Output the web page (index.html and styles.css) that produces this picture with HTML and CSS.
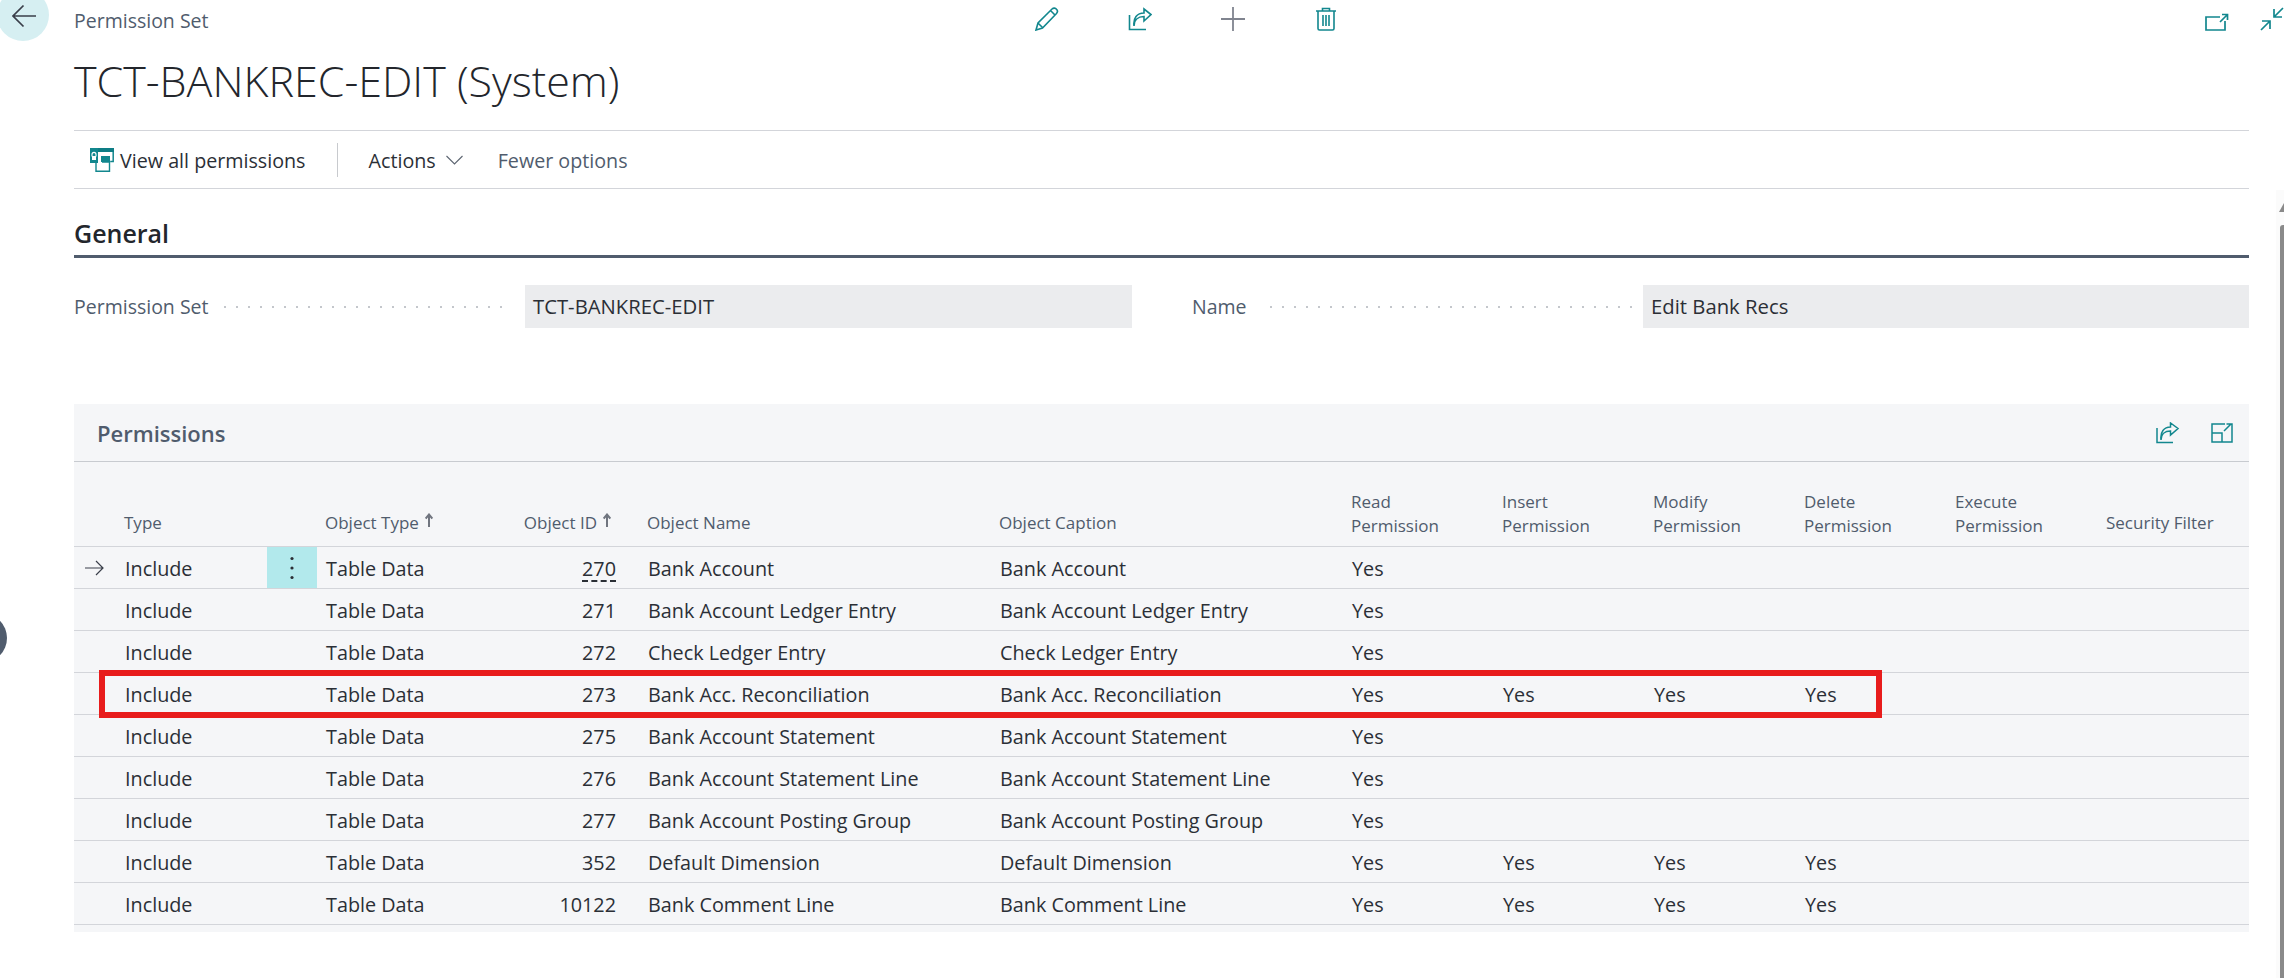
FILE: index.html
```html
<!DOCTYPE html>
<html lang="en">
<head>
<meta charset="utf-8">
<title>TCT-BANKREC-EDIT (System)</title>
<link rel="stylesheet" href="styles.css">
</head>
<body>
<div class="back"><svg width="24" height="24" viewBox="0 0 24 24" fill="none" stroke="#3a3f4a" stroke-width="1.7"><path d="M1 12H24M11.500 1.500 1 12l10.500 10.500"/></svg></div>
<div class="side-dot"></div>
<div class="scrollbar"><div class="scroll-up"></div><div class="scroll-thumb"></div></div>
<main class="page">
  <header class="top">
    <div class="crumb">Permission Set</div>
    <div class="top-icons">
      <svg class="ic" width="24" height="24" viewBox="0 0 24 24" fill="none" stroke="#12878e" stroke-width="1.6"><path d="M1 23l2-7L17 2c1.500-1.300 3.500-1 4.500.2 1.200 1.300 1.200 3 0 4.300L7.500 21zM3 16l5 5M15.500 3.500l5 5"/></svg>
      <svg class="ic" width="24" height="24" viewBox="0 0 24 24" fill="none" stroke="#12878e" stroke-width="1.6"><path d="M1.500 8v14.500H18M6 19c0-6 4-9.500 10-9.500V14l7-6.500L16 2v4C9 6 5 11 6 19z"/></svg>
      <svg class="ic" width="24" height="24" viewBox="0 0 24 24" fill="none" stroke="#80848f" stroke-width="1.800"><path d="M12 0v24M0 12h24"/></svg>
      <svg class="ic" width="24" height="24" viewBox="0 0 24 24" fill="none" stroke="#12878e" stroke-width="1.600"><path d="M2 4h20M4 4v17.500c0 1 .6 1.500 1.500 1.500h13c1 0 1.500-.6 1.500-1.500V4M8.500 4V1.500h7V4M9 8v11M12 8v11M15 8v11"/></svg>
    </div>
    <div class="corner-icons">
      <svg class="expand-ic" width="24" height="20" viewBox="0 0 24 20" fill="none" stroke="#12878e" stroke-width="1.700"><path d="M15 4H1v13h19V8M15 9l7-7M17 1.500h5.500V7"/></svg>
      <svg width="24" height="24" viewBox="0 0 24 24" fill="none" stroke="#12878e" stroke-width="1.700"><path d="M1 23l9-9M2 14H10V22M23 1l-9 9M14 2v8h8"/></svg>
    </div>
  </header>
  <h1 class="title">TCT-BANKREC-EDIT (System)</h1>
  <nav class="toolbar">
    <span class="tool first"><svg width="24" height="24" viewBox="0 0 24 24"><rect x="0" y="0" width="8" height="15" fill="#12878e"/><rect x="8" y="0" width="16" height="4" fill="#0e7d85"/><path d="M2 8.500V6.500c0-2.800 4-2.800 4 0v2" fill="none" stroke="#fff" stroke-width="1.100"/><rect x="2" y="8" width="4" height="4" fill="#fff"/><path d="M23.200 4v9.500h-3" fill="none" stroke="#12878e" stroke-width="1.500"/><rect x="11" y="8" width="9" height="6" fill="#12878e"/><path d="M6 15v8.300h13.500V14H12" fill="none" stroke="#12878e" stroke-width="1.400"/></svg><span class="tool-text">View all permissions</span></span>
    <span class="tool-sep"></span>
    <span class="tool actions"><span class="tool-text">Actions</span><svg width="17" height="10" viewBox="0 0 17 10" fill="none" stroke="#5c6470" stroke-width="1.100"><path d="M.5 1l8 8 8-8"/></svg></span>
    <span class="tool fewer"><span class="tool-text">Fewer options</span></span>
  </nav>
  <section class="general">
    <h2 class="general-title">General</h2>
    <div class="fields">
      <div class="field"><span class="field-label">Permission Set</span><span class="dots"></span><span class="field-value">TCT-BANKREC-EDIT</span></div>
      <div class="field right"><span class="field-label">Name</span><span class="dots"></span><span class="field-value">Edit Bank Recs</span></div>
    </div>
  </section>
  <section class="panel">
    <div class="panel-head">
      <span class="panel-title">Permissions</span>
      <span class="panel-icons">
        <svg width="24" height="22" viewBox="0 0 24 22" fill="none" stroke="#12878e" stroke-width="1.500"><path d="M1 6v14.500h16M5 18c0-6 4-9 9.500-9v4l7.500-6.500L14.500 1v4C8 5 4 10 5 18z"/></svg>
        <svg width="22" height="20" viewBox="0 0 22 20" fill="none" stroke="#12878e" stroke-width="1.500"><path d="M14 1H1v18h20V6M1 10h10v9M13 8l7-7M15.500 1H21v5.500"/></svg>
      </span>
    </div>
    <div class="grid head-row">
      <span></span>
      <span class="h">Type</span>
      <span></span>
      <span class="h h-otype">Object Type<svg class="sort" width="8" height="14" viewBox="0 0 8 14" fill="none" stroke="#70757f" stroke-width="2"><path d="M4 14V2M.7 5.500 4 1.500l3.300 4"/></svg></span>
      <span class="h h-id">Object ID<svg class="sort" width="8" height="14" viewBox="0 0 8 14" fill="none" stroke="#70757f" stroke-width="2"><path d="M4 14V2M.7 5.500 4 1.500l3.300 4"/></svg></span>
      <span class="h c-name">Object Name</span>
      <span class="h">Object Caption</span>
      <span class="h two">Read<br>Permission</span>
      <span class="h two">Insert<br>Permission</span>
      <span class="h two">Modify<br>Permission</span>
      <span class="h two">Delete<br>Permission</span>
      <span class="h two">Execute<br>Permission</span>
      <span class="h">Security Filter</span>
    </div>
    <div class="grid row current">
      <span class="mark"><svg width="19" height="16" viewBox="0 0 19 16" fill="none" stroke="#3a3f4a" stroke-width="1.200"><path d="M0 8h18M11 1l7 7-7 7"/></svg></span>
      <span>Include</span><span class="menu"><svg width="4" height="24" viewBox="0 0 4 24" fill="#2b2f36"><circle cx="2" cy="2.500" r="1.600"/><circle cx="2" cy="12" r="1.600"/><circle cx="2" cy="21.500" r="1.600"/></svg></span><span class="c-otype">Table Data</span><span class="num"><u class="link">270</u></span><span class="c-name">Bank Account</span><span>Bank Account</span><span>Yes</span><span></span><span></span><span></span><span></span><span></span>
    </div>
    <div class="grid row"><span></span><span>Include</span><span></span><span class="c-otype">Table Data</span><span class="num">271</span><span class="c-name">Bank Account Ledger Entry</span><span>Bank Account Ledger Entry</span><span>Yes</span><span></span><span></span><span></span><span></span><span></span></div>
    <div class="grid row"><span></span><span>Include</span><span></span><span class="c-otype">Table Data</span><span class="num">272</span><span class="c-name">Check Ledger Entry</span><span>Check Ledger Entry</span><span>Yes</span><span></span><span></span><span></span><span></span><span></span></div>
    <div class="grid row"><span></span><span>Include</span><span></span><span class="c-otype">Table Data</span><span class="num">273</span><span class="c-name">Bank Acc. Reconciliation</span><span>Bank Acc. Reconciliation</span><span>Yes</span><span>Yes</span><span>Yes</span><span>Yes</span><span></span><span></span><div class="highlight"></div></div>
    <div class="grid row"><span></span><span>Include</span><span></span><span class="c-otype">Table Data</span><span class="num">275</span><span class="c-name">Bank Account Statement</span><span>Bank Account Statement</span><span>Yes</span><span></span><span></span><span></span><span></span><span></span></div>
    <div class="grid row"><span></span><span>Include</span><span></span><span class="c-otype">Table Data</span><span class="num">276</span><span class="c-name">Bank Account Statement Line</span><span>Bank Account Statement Line</span><span>Yes</span><span></span><span></span><span></span><span></span><span></span></div>
    <div class="grid row"><span></span><span>Include</span><span></span><span class="c-otype">Table Data</span><span class="num">277</span><span class="c-name">Bank Account Posting Group</span><span>Bank Account Posting Group</span><span>Yes</span><span></span><span></span><span></span><span></span><span></span></div>
    <div class="grid row"><span></span><span>Include</span><span></span><span class="c-otype">Table Data</span><span class="num">352</span><span class="c-name">Default Dimension</span><span>Default Dimension</span><span>Yes</span><span>Yes</span><span>Yes</span><span>Yes</span><span></span><span></span></div>
    <div class="grid row"><span></span><span>Include</span><span></span><span class="c-otype">Table Data</span><span class="num">10122</span><span class="c-name">Bank Comment Line</span><span>Bank Comment Line</span><span>Yes</span><span>Yes</span><span>Yes</span><span>Yes</span><span></span><span></span></div>
  </section>
</main>
</body>
</html>
```
FILE: styles.css
```css
* { box-sizing: border-box; }
html, body { margin: 0; height: 978px; overflow: hidden; background: #fff; }
body { font-family: "Open Sans", "Liberation Sans", sans-serif; font-size: 19.800px; color: #2b2f36; position: relative; }
.back { position: absolute; left: -3px; top: -11px; width: 52px; height: 52px; border-radius: 50%; background: #d6eff2; }
.back svg { position: absolute; left: 15px; top: 15px; }
.side-dot { position: absolute; left: -43px; top: 613px; width: 50px; height: 50px; border-radius: 50%; background: #505c6d; }
.scrollbar { position: absolute; right: 0; top: 190px; bottom: 0; width: 8px; background: #fbfbfb; }
.scroll-up { position: absolute; right: 0; top: 13px; width: 0; height: 0; border-left: 5px solid transparent; border-bottom: 9px solid #8a8a8a; }
.scroll-thumb { position: absolute; right: 0; top: 35px; bottom: 0; width: 4px; background: #8a8a8a; border-radius: 3px 0 0 0; }
.page { margin-left: 74px; width: 2175px; }
.top { height: 40px; display: flex; align-items: center; position: relative; }
.crumb { color: #505c6d; font-size: 19.500px; }
.top-icons { position: absolute; left: 961px; top: 7px; display: flex; gap: 69px; }
.corner-icons { position: absolute; left: 2131px; top: 7px; display: flex; gap: 31px; align-items: flex-start; }
.expand-ic { margin-top: 6px; }
.title { margin: 16px 0 0; height: 74px; font-size: 43px; line-height: 50px; font-weight: 300; color: #23262c; }
.toolbar { height: 59px; border-top: 1px solid #d3d5da; border-bottom: 1px solid #d3d5da; display: flex; align-items: center; font-size: 19.700px; }
.tool { display: flex; align-items: center; }
.tool-text { padding-top: 2px; }
.tool.first { padding-left: 16px; gap: 6px; }
.tool-sep { width: 1px; height: 34px; background: #c8cace; margin: 0 31px 0 31px; }
.actions { gap: 10px; }
.fewer { margin-left: 35px; color: #505c6d; }
.general-title { margin: 0; height: 69px; padding-top: 29px; font-size: 25px; line-height: 30px; font-weight: 600; color: #23262c; border-bottom: 3px solid #505c6d; }
.fields { display: flex; margin-top: 27px; }
.field { display: flex; align-items: center; height: 43px; width: 1058px; }
.field.right { width: 1057px; margin-left: 60px; }
.field-label { color: #505c6d; font-size: 19.500px; white-space: nowrap; }
.dots { flex: 1; height: 2px; margin: 0 16px 0 11px; background-image: radial-gradient(circle, #c4c7cc 1px, transparent 1.100px); background-size: 12px 2px; }
.field.right .dots { margin: 0 11px 0 18px; }
.field-value { background: #ebecee; height: 43px; line-height: 43px; padding-left: 8px; width: 607px; font-size: 20.300px; }
.field.right .field-value { width: 606px; }
.panel { margin-top: 76px; background: #f5f6f8; height: 528px; }
.panel-head { height: 58px; border-bottom: 1px solid #c8cbd0; display: flex; align-items: center; justify-content: space-between; padding: 0 16px 0 23px; }
.panel-title { font-size: 22px; font-weight: 600; color: #505c6d; }
.panel-icons { display: flex; gap: 31px; align-items: center; }
.grid { display: grid; grid-template-columns: 50px 143px 50px 189px 110px 383px 352px 151px 151px 151px 151px 151px 143px; }
.head-row { height: 85px; border-bottom: 1px solid #d3d5da; color: #505c6d; font-size: 17px; align-items: end; padding-bottom: 11px; line-height: 24px; white-space: nowrap; }
.two { margin-bottom: -3px; }
.h-otype { padding-left: 8px; }
.h-id { text-align: right; padding-right: 5px; }
.sort { margin-left: 6px; vertical-align: 2px; }
.c-name { padding-left: 31px; }
.row { height: 42px; border-bottom: 1px solid #d3d5da; align-items: center; position: relative; white-space: nowrap; }
.row > span { padding-left: 1px; padding-top: 2px; }
.row > .c-otype { padding-left: 9px; }
.row > .c-name { padding-left: 32px; }
.row > .num { padding-left: 0; text-align: right; }
.mark { display: flex; align-items: center; }
.row > .mark { padding-left: 11px; padding-top: 0; }
.link { text-decoration: underline dashed 1.500px; text-underline-offset: 4px; }
.row > .menu { background: #b2e9ec; height: 41px; padding: 0; display: flex; align-items: center; justify-content: center; }
.highlight { position: absolute; left: 25px; top: -3px; width: 1783px; height: 48px; border: 6px solid #e81c1c; }
```
